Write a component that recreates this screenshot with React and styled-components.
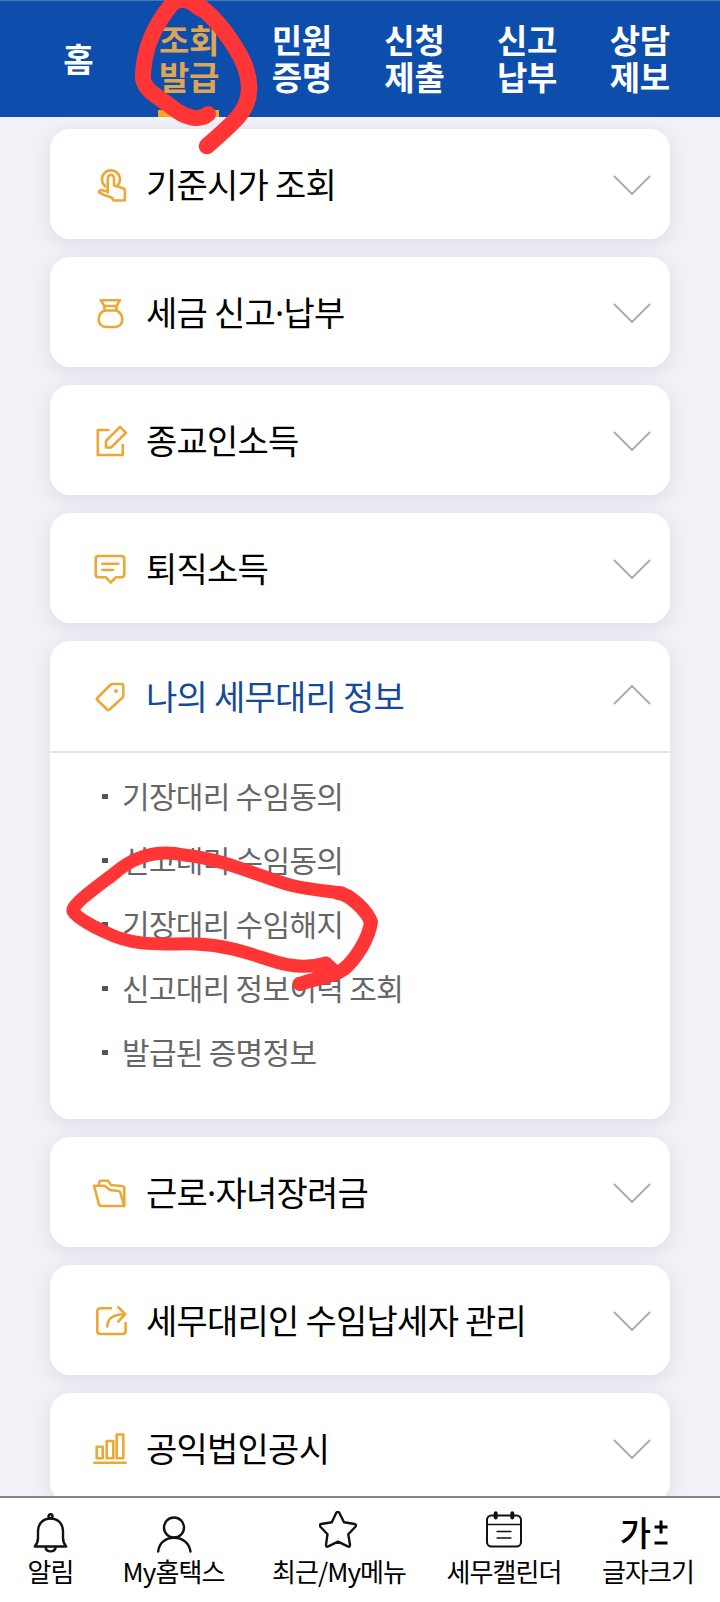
import React, { useState } from 'react'
import styled, { createGlobalStyle } from 'styled-components'

const tabs = [
  ['홈'],
  ['조회', '발급'],
  ['민원', '증명'],
  ['신청', '제출'],
  ['신고', '납부'],
  ['상담', '제보']
]

const menus = [
  { icon: 'touch', title: '기준시가 조회' },
  { icon: 'bag', title: '세금 신고·납부' },
  { icon: 'edit', title: '종교인소득' },
  { icon: 'chat', title: '퇴직소득' },
  {
    icon: 'tag',
    title: '나의 세무대리 정보',
    items: [
      '기장대리 수임동의',
      '신고대리 수임동의',
      '기장대리 수임해지',
      '신고대리 정보이력 조회',
      '발급된 증명정보'
    ]
  },
  { icon: 'folder', title: '근로·자녀장려금' },
  { icon: 'share', title: '세무대리인 수임납세자 관리' },
  { icon: 'bars', title: '공익법인공시' }
]

const menuIcons = {
  touch: (
    <>
      <path d="M13.5 20.5 A9 9 0 1 1 25.5 19.5" />
      <path d="M15.8 26.5 V12 a3.1 3.1 0 0 1 6.2 0 V19.5 L30.5 22 Q33 22.8 33 25 L32.7 34.5 H21.5 C21 31.5 18 31 13.5 29.5 L7.5 26.8 Q5.8 24.6 9 24 L15.8 25.5" />
    </>
  ),
  bag: (
    <>
      <path d="M8.7 6.2 H28 L24.5 12 V16.5 H12.5 V12 Z" />
      <path d="M12.5 12 H24.5" />
      <path d="M12.5 16.5 C4.5 20 4.5 33 14 33 H23 C32.5 33 32.5 20 24.5 16.5" />
    </>
  ),
  edit: (
    <>
      <path d="M16.5 8 H5.8 V33 H30.8 V23" />
      <path d="M28 4.8 L34 10.8 L19 25.5 H14 V19 Z" />
    </>
  ),
  chat: (
    <>
      <path d="M6.7 6 H29.3 Q32.3 6 32.3 9 V24.3 Q32.3 27.3 29.3 27.3 H24 L18.7 32.5 L14 27.3 H6.7 Q3.7 27.3 3.7 24.3 V9 Q3.7 6 6.7 6 Z" />
      <path d="M10.3 13.7 H26.3 M10.3 20 H21" />
    </>
  ),
  tag: (
    <>
      <path d="M20.5 6 H29.5 Q31.3 6 31.3 8 V17.5 Q31.3 19 30.2 20 L17.5 31.5 Q16.3 32.5 15.2 31.5 L5.3 22 Q4.3 21 5.3 20 L18.2 7 Q19.2 6 20.5 6 Z" />
      <circle cx="24" cy="13" r="0.8" />
    </>
  ),
  folder: (
    <>
      <path d="M6.7 11.5 L7.5 7.5 Q7.8 6.7 9 6.7 H16 L19 11 L31 12.3 Q32.3 12.5 32.3 14 V32" />
      <path d="M2 11.7 H12.5 L18 16 L26.5 17 Q28 17.3 28.5 19 L32 32 H9 Q7.5 32 7 30.5 Z" />
    </>
  ),
  share: (
    <>
      <path d="M19 6.3 H8.3 Q5.3 6.3 5.3 9.3 V29 Q5.3 32 8.3 32 H30.5 Q33.6 32 33.6 29 V21" />
      <path d="M15.3 24.5 C15.3 16 22 12.2 33 12.2 M26.3 5.3 L33.3 12.2 L26.3 19.5" />
    </>
  ),
  bars: (
    <>
      <path d="M2.3 32.7 H33.7" />
      <path d="M4.7 16.7 H10.7 V28.3 H4.7 Z M14.7 11 H21.3 V28.3 H14.7 Z M24.7 4.5 H31.3 V28.3 H24.7 Z" />
    </>
  )
}

const BellIcon = () => (
  <BarIcon viewBox="0 0 40 42">
    <path d="M3.8 35.5 Q7 32 7 27 V20 C7 12.5 12.5 7.5 19.5 7.5 C26.5 7.5 32 12.5 32 20 V27 Q32 32 35.2 35.5 Z" />
    <path d="M14.5 36 Q15 40.4 19.5 40.4 Q24.2 40.4 24.7 36" />
    <circle cx="19.5" cy="5.2" r="2" />
  </BarIcon>
)

const PersonIcon = () => (
  <BarIcon viewBox="0 0 40 42">
    <circle cx="20" cy="16.5" r="10" />
    <path d="M4.2 40.5 C5 32 11.5 26.7 20 26.7 C28.5 26.7 35.2 32 36.5 40.5" />
  </BarIcon>
)

const StarIcon = () => (
  <BarIcon viewBox="0 0 40 42">
    <path d="M17.3 1.8 Q18.8 -0.2 20.3 1.8 L25 11.2 L35.6 13 Q38 13.7 36.4 15.7 L29.3 23.2 L31 33.8 Q31 36.4 28.7 35.4 L19 30.6 L9.3 35.4 Q7 36.4 7 33.8 L8.5 23.2 L1.4 15.7 Q0 13.7 2.2 13 L12.8 11.2 Z" />
  </BarIcon>
)

const CalendarIcon = () => (
  <BarIcon viewBox="0 0 40 42">
    <rect x="3" y="4.5" width="34" height="31" rx="4.5" strokeWidth="2" />
    <path d="M3 13.5 H37 M13 20.5 H27 M13 27 H27" strokeWidth="1.3" />
    <path d="M11.7 2.2 V6.5 M28.3 2.2 V6.5" strokeWidth="4" />
  </BarIcon>
)

const shortcuts = [
  { label: '알림', icon: <BellIcon /> },
  { label: 'My홈택스', icon: <PersonIcon /> },
  { label: '최근/My메뉴', icon: <StarIcon /> },
  { label: '세무캘린더', icon: <CalendarIcon /> },
  { label: '글자크기', icon: null }
]

// the CJK middle dot is too wide for a title, so it gets the latin one
const renderTitle = (title) => {
  const [before, after] = title.split('·')
  return after ? <>{before}<Dot>·</Dot>{after}</> : title
}

const MenuCard = ({ menu, open, onToggle }) => (
  <Card>
    <CardHeader type="button" onClick={onToggle}>
      <MenuIcon viewBox="0 0 36 36">{menuIcons[menu.icon]}</MenuIcon>
      <CardTitle $open={open}>{renderTitle(menu.title)}</CardTitle>
      <Chevron viewBox="0 0 38 20" $open={open}>
        <path d="M1 1 L19 19 L37 1" />
      </Chevron>
    </CardHeader>
    {open && menu.items && (
      <SubList>
        {menu.items.map((item) => (
          <SubItem key={item}>{item}</SubItem>
        ))}
      </SubList>
    )}
  </Card>
)

export default function App() {
  const [activeTab, setActiveTab] = useState(1)
  const [openMenu, setOpenMenu] = useState('tag')

  return (
    <Screen>
      <GlobalStyle />
      <TopNav>
        {tabs.map((lines, index) => (
          <Tab key={lines[0]} type="button" $active={index === activeTab} onClick={() => setActiveTab(index)}>
            {lines.join('\n')}
          </Tab>
        ))}
      </TopNav>
      <MenuList>
        {menus.map((menu) => (
          <MenuCard
            key={menu.icon}
            menu={menu}
            open={openMenu === menu.icon}
            onToggle={() => setOpenMenu(openMenu === menu.icon ? '' : menu.icon)} />
        ))}
      </MenuList>
      <BottomBar>
        {shortcuts.map(({ label, icon }) => (
          <Shortcut key={label} type="button">
            {icon || <FontSizeMark>가<PlusMinus viewBox="0 0 14 26"><path d="M0.5 8 H13.5 M7 1.5 V14.5 M0.5 24 H13.5" /></PlusMinus></FontSizeMark>}
            <ShortcutLabel>{label}</ShortcutLabel>
          </Shortcut>
        ))}
      </BottomBar>
      <Scribble viewBox="0 0 720 1602">
        <path strokeWidth="16" d="M208 114 C200 121 187 118 177 111 L151 92 C142 84 142 78 144 64 C147 42 158 21 171 5 C178 -3 190 -1 199 8" />
        <path strokeWidth="16.5" d="M188 0 C205 7 222 26 235 47 C246 64 250 77 249 91 C248 110 237 120 207 146" />
        <path strokeWidth="13" d="M326 963 C310 968 290 967 270 960 C245 952 225 945 196 944 C165 943 138 948 107 933 C92 926 76 917 73 911 C71 905 98 886 115 873 C136 855 160 850 184 855 C225 859 260 877 290 885 C315 891 330 891 342 893" />
        <path strokeWidth="14" d="M338 893 C350 894 367 911 371 922 C369 938 356 959 344 969 C332 978 315 978 300 984" />
        <path strokeWidth="13" d="M318 969 L327 964 L336 972" />
      </Scribble>
    </Screen>
  )
}

const GlobalStyle = createGlobalStyle`
* {
  box-sizing: border-box;
}

body {
  margin: 0;
  font-family: 'Noto Sans CJK KR', sans-serif;
  overflow: hidden;
}

button {
  border: 0;
  background: none;
  padding: 0;
  font: inherit;
  color: inherit;
  cursor: pointer;
}
`

const Screen = styled.div`
position: relative;
display: flex;
flex-direction: column;
width: 720px;
height: 1602px;
background: #f1f2f8;
overflow: hidden;
`

const TopNav = styled.nav`
display: flex;
flex: none;
height: 117px;
padding-left: 20px;
background: #0d4dac;
border-top: 1px solid #4678b4;
`

const Tab = styled.button`
position: relative;
display: flex;
flex: none;
flex-direction: column;
align-items: center;
justify-content: center;
width: 112.7px;
padding-bottom: 3px;
font-size: 33px;
font-weight: 700;
line-height: 37px;
letter-spacing: -0.3px;
white-space: pre-line;
color: ${(props) => (props.$active ? '#dda554' : '#fff')};

&:first-child {
  padding: 0 0 1px 4px;
}

&::after {
  content: '';
  display: ${(props) => (props.$active ? 'block' : 'none')};
  position: absolute;
  bottom: 0;
  left: 25px;
  width: 61px;
  height: 7px;
  background: #f5a623;
}
`

const MenuList = styled.main`
display: flex;
flex: 1;
flex-direction: column;
gap: 18px;
min-height: 0;
padding: 12px 50px 0;
overflow: hidden;
`

const Card = styled.section`
flex: none;
border-radius: 20px;
background: #fff;
box-shadow: 0 4px 18px rgba(40, 40, 60, 0.1);
`

const CardHeader = styled.button`
display: flex;
align-items: center;
width: 100%;
height: 110px;
padding: 0 19px 0 42px;
`

const MenuIcon = styled.svg`
flex: none;
width: 36px;
height: 36px;
fill: none;
stroke: #eba836;
stroke-width: 2.6;
stroke-linecap: round;
stroke-linejoin: round;
`

const CardTitle = styled.span`
flex: 1;
padding: 0 0 2px 18px;
font-size: 34px;
letter-spacing: -0.75px;
text-align: left;
white-space: nowrap;
color: ${(props) => (props.$open ? '#134a9c' : '#000')};
`

const Dot = styled.span`
font-family: 'Noto Sans', sans-serif;
line-height: 1;
`

const Chevron = styled.svg`
flex: none;
width: 38px;
height: 20px;
margin-top: ${(props) => (props.$open ? '-2px' : '2px')};
fill: none;
stroke: #acacac;
stroke-width: 2;
transform: ${(props) => (props.$open ? 'rotate(180deg)' : 'none')};
`

const SubList = styled.ul`
display: flex;
flex-direction: column;
margin: 0;
padding: 10px 51px 36px;
border-top: 2px solid #e6e6e6;
list-style: none;
`

const SubItem = styled.li`
display: flex;
align-items: center;
gap: 14px;
height: 64px;
font-size: 30px;
letter-spacing: -0.7px;
color: #666;

&::before {
  content: '';
  width: 6px;
  height: 5px;
  margin: 2px 0 0 1px;
  background: #555;
}
`

const BottomBar = styled.footer`
display: grid;
flex: none;
grid-template-columns: 101px 145px 186px 144px 144px;
height: 106px;
border-top: 2px solid #868686;
background: #fff;
`

const Shortcut = styled.button`
display: flex;
flex-direction: column;
align-items: center;
padding-top: 13px;
`

const BarIcon = styled.svg`
flex: none;
width: 40px;
height: 42px;
fill: none;
stroke: #111;
stroke-width: 2.4;
stroke-linecap: round;
stroke-linejoin: round;
`

const ShortcutLabel = styled.span`
margin-top: -1px;
font-size: 26px;
line-height: 38px;
letter-spacing: -0.9px;
white-space: nowrap;
color: #000;
`

const FontSizeMark = styled.span`
display: flex;
align-items: center;
gap: 3px;
height: 42px;
padding-right: 8px;
font-size: 34px;
font-weight: 500;
line-height: 42px;
`

const PlusMinus = styled.svg`
width: 14px;
height: 26px;
fill: none;
stroke: #000;
stroke-width: 3;
`

const Scribble = styled.svg`
position: absolute;
inset: 0;
width: 720px;
height: 1602px;
fill: none;
stroke: #ff3635;
stroke-linecap: round;
stroke-linejoin: round;
pointer-events: none;
`
